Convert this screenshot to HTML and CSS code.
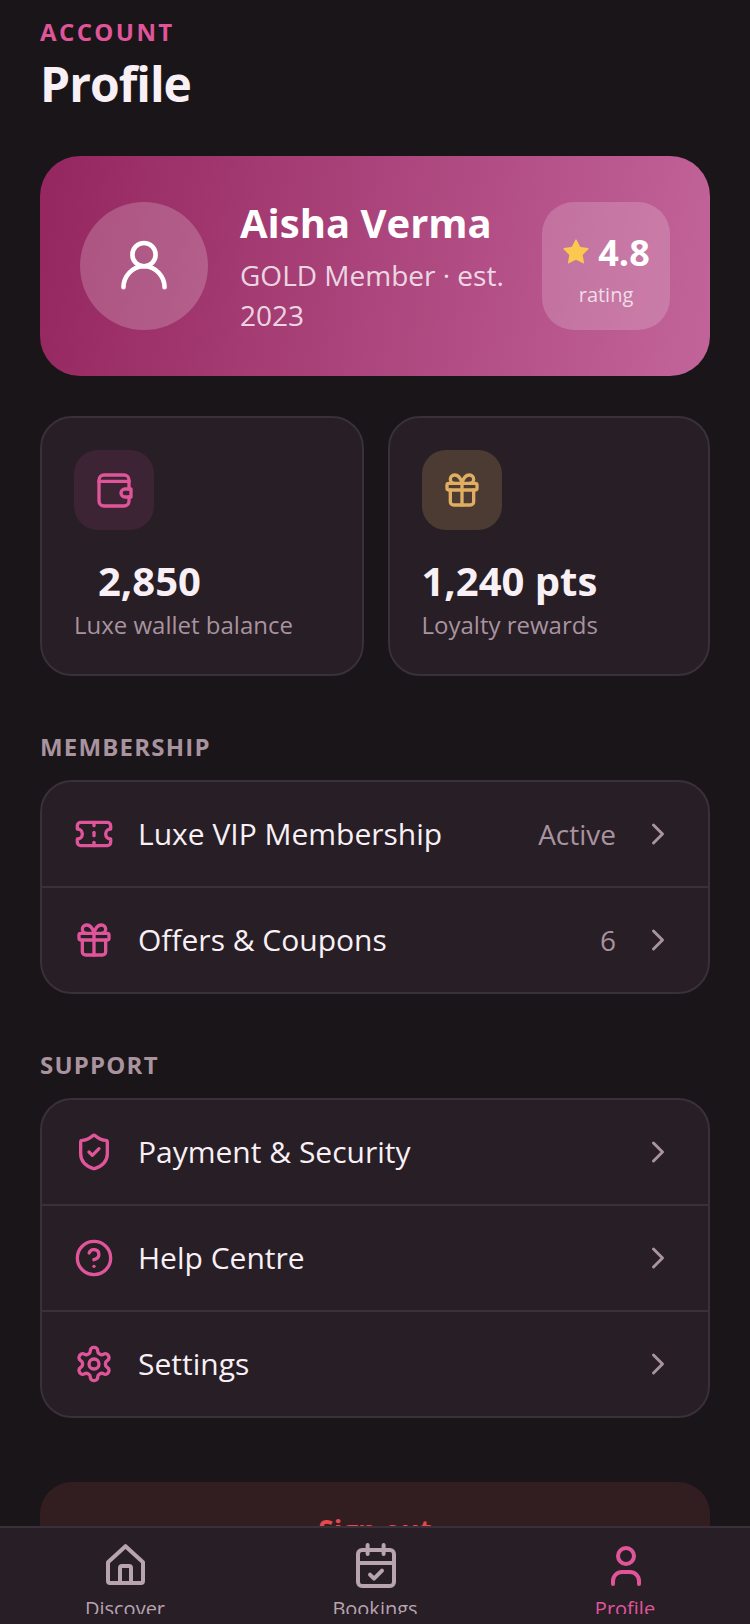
FILE: index.html
```html
<!DOCTYPE html>
<html lang="en">
<head>
<meta charset="utf-8">
<title>Profile</title>
<link rel="stylesheet" href="styles.css">
</head>
<body>
<div class="app">
  <main class="content">
    <header class="head">
      <div class="eyebrow">ACCOUNT</div>
      <h1 class="title">Profile</h1>
    </header>

    <section class="hero">
      <div class="avatar">
        <svg class="ic-56" viewBox="0 0 24 24"><circle cx="12" cy="7.300" r="4.800"/><path d="M3.500 20.800c0-4.400 3.600-8.700 8.500-8.700s8.500 4.300 8.500 8.700"/></svg>
      </div>
      <div class="hero-text">
        <div class="name">Aisha Verma</div>
        <div class="tier">GOLD Member · est. 2023</div>
      </div>
      <div class="rating">
        <div class="rating-top">
          <svg class="star" viewBox="0 0 24 24"><path d="M11.500 2.300a.6.6 0 0 1 1 0l2.800 5.700a1 1 0 0 0 .8.6l6.200.9a.6.6 0 0 1 .3 1l-4.500 4.400a1 1 0 0 0-.3.9l1.100 6.200a.6.6 0 0 1-.8.6l-5.600-2.900a1 1 0 0 0-1 0l-5.600 2.900a.6.6 0 0 1-.8-.6l1.100-6.200a1 1 0 0 0-.3-.9L1.400 10.500a.6.6 0 0 1 .3-1l6.200-.9a1 1 0 0 0 .8-.6z"/></svg>
          <span class="score">4.8</span>
        </div>
        <div class="rating-label">rating</div>
      </div>
    </section>

    <section class="stats">
      <div class="stat">
        <div class="stat-icon pink-bg">
          <svg class="ic-40" viewBox="0 0 24 24"><path d="M21 11.400V6a3 3 0 0 0-3-3H6a3 3 0 0 0-3 3v12.600a3 3 0 0 0 3 3h12a3 3 0 0 0 3-3v-2.400"/><path d="M3 6.800h18"/><path d="M18.600 11.400h3.600v4.800h-3.600a2.400 2.400 0 0 1 0-4.800z"/></svg>
        </div>
        <div class="stat-value indented">2,850</div>
        <div class="stat-label">Luxe wallet balance</div>
      </div>
      <div class="stat">
        <div class="stat-icon gold-bg">
          <svg class="ic-40 gold" viewBox="0 0 24 24"><rect x="3" y="8" width="18" height="4" rx="1"/><path d="M12 8v13"/><path d="M19 12v7a2 2 0 0 1-2 2H7a2 2 0 0 1-2-2v-7"/><path d="M7.500 8a2.500 2.500 0 0 1 0-5A4.800 8 0 0 1 12 8a4.800 8 0 0 1 4.500-5 2.500 2.500 0 0 1 0 5"/></svg>
        </div>
        <div class="stat-value">1,240 pts</div>
        <div class="stat-label">Loyalty rewards</div>
      </div>
    </section>

    <h2 class="section-label">MEMBERSHIP</h2>
    <div class="list">
      <div class="row">
        <svg class="ic-40" viewBox="0 0 24 24"><path d="M2 9a3 3 0 0 1 0 6v2a2 2 0 0 0 2 2h16a2 2 0 0 0 2-2v-2a3 3 0 0 1 0-6V7a2 2 0 0 0-2-2H4a2 2 0 0 0-2 2Z"/><path d="M12 5v2"/><path d="M12 11v2"/><path d="M12 17v2"/></svg>
        <span class="row-text">Luxe VIP Membership</span>
        <span class="row-meta">Active</span>
        <svg class="chev" viewBox="0 0 24 24"><path d="m9 18 6-6-6-6"/></svg>
      </div>
      <div class="row">
        <svg class="ic-40" viewBox="0 0 24 24"><rect x="3" y="8" width="18" height="4" rx="1"/><path d="M12 8v13"/><path d="M19 12v7a2 2 0 0 1-2 2H7a2 2 0 0 1-2-2v-7"/><path d="M7.500 8a2.500 2.500 0 0 1 0-5A4.800 8 0 0 1 12 8a4.800 8 0 0 1 4.500-5 2.500 2.500 0 0 1 0 5"/></svg>
        <span class="row-text">Offers &amp; Coupons</span>
        <span class="row-meta">6</span>
        <svg class="chev" viewBox="0 0 24 24"><path d="m9 18 6-6-6-6"/></svg>
      </div>
    </div>

    <h2 class="section-label">SUPPORT</h2>
    <div class="list">
      <div class="row">
        <svg class="ic-40" viewBox="0 0 24 24"><path d="M20 13c0 5-3.500 7.500-7.660 8.950a1 1 0 0 1-.67-.01C7.500 20.500 4 18 4 13V6a1 1 0 0 1 1-1c2 0 4.500-1.200 6.240-2.720a1.170 1.170 0 0 1 1.520 0C14.510 3.810 17 5 19 5a1 1 0 0 1 1 1z"/><path d="m9 12 2 2 4-4"/></svg>
        <span class="row-text">Payment &amp; Security</span>
        <svg class="chev" viewBox="0 0 24 24"><path d="m9 18 6-6-6-6"/></svg>
      </div>
      <div class="row">
        <svg class="ic-40" viewBox="0 0 24 24"><circle cx="12" cy="12" r="10"/><path d="M9.090 9a3 3 0 0 1 5.830 1c0 2-3 3-3 3"/><path d="M12 17h.01"/></svg>
        <span class="row-text">Help Centre</span>
        <svg class="chev" viewBox="0 0 24 24"><path d="m9 18 6-6-6-6"/></svg>
      </div>
      <div class="row">
        <svg class="ic-40" viewBox="0 0 24 24"><path d="M12.220 2h-.44a2 2 0 0 0-2 2v.18a2 2 0 0 1-1 1.730l-.43.25a2 2 0 0 1-2 0l-.15-.08a2 2 0 0 0-2.730.73l-.22.38a2 2 0 0 0 .73 2.730l.15.1a2 2 0 0 1 1 1.720v.51a2 2 0 0 1-1 1.740l-.15.09a2 2 0 0 0-.73 2.730l.22.38a2 2 0 0 0 2.730.73l.15-.08a2 2 0 0 1 2 0l.43.25a2 2 0 0 1 1 1.730V20a2 2 0 0 0 2 2h.44a2 2 0 0 0 2-2v-.18a2 2 0 0 1 1-1.730l.43-.25a2 2 0 0 1 2 0l.15.08a2 2 0 0 0 2.730-.73l.22-.39a2 2 0 0 0-.73-2.730l-.15-.08a2 2 0 0 1-1-1.740v-.5a2 2 0 0 1 1-1.740l.15-.09a2 2 0 0 0 .73-2.730l-.22-.38a2 2 0 0 0-2.730-.73l-.15.08a2 2 0 0 1-2 0l-.43-.25a2 2 0 0 1-1-1.730V4a2 2 0 0 0-2-2z"/><circle cx="12" cy="12" r="3"/></svg>
        <span class="row-text">Settings</span>
        <svg class="chev" viewBox="0 0 24 24"><path d="m9 18 6-6-6-6"/></svg>
      </div>
    </div>

    <button class="signout" type="button">Sign out</button>
  </main>

  <nav class="nav">
    <div class="nav-item">
      <svg class="ic-48" viewBox="0 0 24 24"><path d="M3.500 10.600 12.250 2.600 21 10.600v9.400a1 1 0 0 1-1 1H4.500a1 1 0 0 1-1-1z"/><path d="M9.500 21v-7.500a1 1 0 0 1 1-1h3.500a1 1 0 0 1 1 1V21"/></svg>
      <span class="nav-label">Discover</span>
    </div>
    <div class="nav-item">
      <svg class="ic-48" viewBox="0 0 24 24"><rect x="3.500" y="4.500" width="18" height="18" rx="2"/><path d="M3.500 11h18"/><path d="M8.300 2v4.500"/><path d="M16.300 2v4.500"/><path d="m9.500 16.800 2 2 4-4"/></svg>
      <span class="nav-label">Bookings</span>
    </div>
    <div class="nav-item active">
      <svg class="ic-48" viewBox="0 0 24 24"><circle cx="12.500" cy="7.500" r="4"/><path d="M6 21.500v-1.500a4.500 4.500 0 0 1 4.500-4.500h4a4.500 4.500 0 0 1 4.500 4.500v1.500"/></svg>
      <span class="nav-label">Profile</span>
    </div>
  </nav>
</div>
</body>
</html>
```
FILE: styles.css
```css
* { box-sizing: border-box; }
html, body { margin: 0; padding: 0; }
body {
  width: 750px;
  height: 1624px;
  background: #1a1519;
  color: #f8f0f5;
  font-family: "Open Sans", "Noto Sans", sans-serif;
  overflow: hidden;
}
svg {
  fill: none;
  stroke: currentColor;
  stroke-width: 2;
  stroke-linecap: round;
  stroke-linejoin: round;
  flex: none;
  display: block;
}
.app { height: 1624px; display: flex; flex-direction: column; }
.content { flex: 1; min-height: 0; overflow: hidden; padding: 15px 40px 0; }

.eyebrow { font-size: 24px; line-height: 33px; font-weight: 700; letter-spacing: 2.4px; color: #e0559a; }
.title { margin: 3px 0 0; font-size: 48px; line-height: 65px; font-weight: 700; letter-spacing: -1px; color: #f8f0f5; }

.hero {
  margin-top: 40px;
  height: 220px;
  border-radius: 40px;
  padding: 40px;
  display: flex;
  align-items: center;
  gap: 32px;
  background: linear-gradient(100deg, #95265f 0%, #c2649a 100%);
}
.avatar {
  width: 128px; height: 128px; flex: none;
  border-radius: 50%;
  background: rgba(255, 255, 255, .2);
  display: flex; align-items: center; justify-content: center;
  color: #fff;
}
.ic-56 { width: 58px; height: 58px; stroke-width: 1.9; }
.hero-text { flex: 1; min-width: 0; padding-bottom: 1px; }
.name { font-size: 40px; line-height: 54px; font-weight: 700; color: #fff; margin-bottom: 5px; }
.tier { font-size: 28px; line-height: 40px; color: rgba(255, 255, 255, .8); }
.rating {
  width: 128px; height: 128px; flex: none;
  border-radius: 32px;
  padding-top: 6px;
  background: rgba(255, 255, 255, .18);
  display: flex; flex-direction: column; align-items: center; justify-content: center;
}
.rating-top { display: flex; align-items: center; gap: 8px; }
.star { width: 28px; height: 28px; margin-bottom: 4px; fill: #fbc94f; stroke: none; }
.score { font-size: 36px; line-height: 49px; font-weight: 700; color: #fff; }
.rating-label { font-size: 20px; line-height: 30px; margin-top: 3px; color: rgba(255, 255, 255, .75); }

.stats { margin-top: 40px; display: grid; grid-template-columns: 323.5px 322.5px; gap: 24px; }
.stat {
  height: 260px;
  padding: 32px;
  background: #271e26;
  border: 2px solid #3a3039;
  border-radius: 32px;
}
.stat-icon {
  width: 80px; height: 80px;
  border-radius: 24px;
  display: flex; align-items: center; justify-content: center;
}
.pink-bg { background: rgba(224, 85, 154, .12); }
.gold-bg { background: rgba(224, 174, 99, .2); }
.ic-40 { width: 40px; height: 40px; color: #e0559a; }
.ic-40.gold { color: #e0ae63; }
.stat-value { margin-top: 24px; font-size: 40px; line-height: 54px; font-weight: 700; color: #f8f0f5; }
.indented { padding-left: 24px; }
.stat-label { margin-top: 1px; font-size: 24px; line-height: 32px; color: #a8939f; }

.section-label {
  margin: 55px 0 17px;
  font-size: 24px; line-height: 32px; font-weight: 700;
  letter-spacing: 1.2px;
  color: #a8939f;
}
.list { background: #271e26; border: 2px solid #3a3039; border-radius: 32px; }
.row {
  height: 104px;
  padding: 0 32px;
  display: flex; align-items: center; gap: 24px;
}
.row + .row { height: 106px; border-top: 2px solid #3a3039; }
.row-text { flex: 1; font-size: 30px; line-height: 40px; color: #f8f0f5; }
.row-meta { font-size: 28px; line-height: 38px; color: #a8939f; }
.chev { width: 36px; height: 36px; color: #a8939f; }

.signout {
  display: block;
  width: 100%;
  height: 96px;
  margin-top: 64px;
  border: 0;
  border-radius: 32px;
  background: #321d20;
  color: #e5484d;
  font-family: inherit;
  font-size: 28px;
  font-weight: 700;
}

.nav {
  flex: none;
  height: 98px;
  padding: 13px 0 10px;
  background: #271e26;
  border-top: 2px solid #3a3039;
  display: grid;
  grid-template-columns: repeat(3, 1fr);
}
.nav-item {
  min-height: 0;
  overflow: hidden;
  display: flex; flex-direction: column; align-items: center; gap: 5px;
  color: #b8a3b0;
}
.nav-item.active { color: #e0559a; }
.ic-48 { width: 48px; height: 48px; }
.nav-label { font-size: 20px; line-height: 30px; }
```
